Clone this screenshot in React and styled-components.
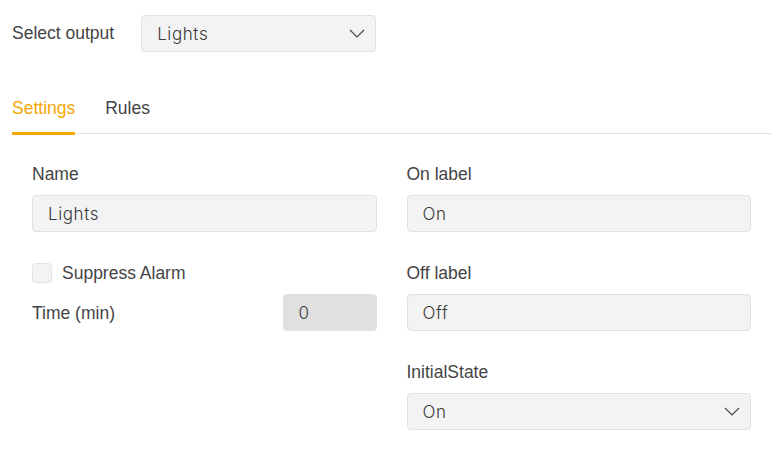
import React from "react";
import styled, { createGlobalStyle } from "styled-components";

const GlobalStyle = createGlobalStyle`
  body {
    margin: 0;
    background: #ffffff;
    font-family: "Liberation Sans", Arial, sans-serif;
  }
`;

const Page = styled.div`
  padding: 15px 10px 0 12px;
  width: 782px;
  box-sizing: border-box;
`;

const OutputRow = styled.div`
  display: flex;
  align-items: flex-start;
  gap: 27px;
`;

const Label = styled.div`
  font-family: "Liberation Sans", Arial, sans-serif;
  font-size: 17.5px;
  line-height: 22px;
  color: #444444;
  margin-top: ${props => props.offset || "0px"};
`;

const SelectBox = styled.div`
  box-sizing: border-box;
  width: ${props => props.width || "100%"};
  height: 37px;
  padding: 0 10px 0 15px;
  display: flex;
  align-items: center;
  justify-content: space-between;
  background: #f3f3f3;
  border: 1px solid #e1e1e1;
  border-radius: 4px;
  font-family: Inter, "Noto Sans", sans-serif;
  font-size: 17px;
  font-weight: 300;
  letter-spacing: 0.6px;
  color: #3a3a3a;
`;

const Tabs = styled.div`
  display: flex;
  gap: 30px;
  margin-top: 46px;
  border-bottom: 1px solid #e2e2e2;
`;

const Tab = styled.div`
  font-family: "Liberation Sans", Arial, sans-serif;
  font-size: 17.5px;
  line-height: 21px;
  padding-bottom: 13px;
  margin-bottom: -2px;
  color: ${props => (props.active ? "#f5a700" : "#444444")};
  border-bottom: 3px solid ${props => (props.active ? "#f5a700" : "transparent")};
`;

const Content = styled.div`
  display: grid;
  grid-template-columns: 1fr 1fr;
  column-gap: 30px;
  padding: 29px 21px 0 20px;
`;

const Column = styled.div`
  display: flex;
  flex-direction: column;
  gap: 30px;
`;

const Field = styled.div`
  display: flex;
  flex-direction: column;
  gap: 10px;
`;

const Input = styled.div`
  box-sizing: border-box;
  height: 37px;
  width: ${props => props.width || "100%"};
  padding: 0 15px;
  display: flex;
  align-items: center;
  background: ${props => (props.dark ? "#e0e0e0" : "#f3f3f3")};
  border: 1px solid ${props => (props.dark ? "#e0e0e0" : "#e1e1e1")};
  border-radius: 4px;
  font-family: Inter, "Noto Sans", sans-serif;
  font-size: 17px;
  font-weight: 300;
  letter-spacing: 0.6px;
  color: #3a3a3a;
`;

const CheckRow = styled.label`
  display: flex;
  align-items: center;
  gap: 10px;
  height: 22px;
  font-size: 17.5px;
  color: #444444;
`;

const CheckBox = styled.span`
  box-sizing: border-box;
  width: 20px;
  height: 20px;
  background: #f3f3f3;
  border: 1px solid #e4e4e4;
  border-radius: 4px;
`;

const TimeRow = styled.div`
  display: flex;
  align-items: center;
  justify-content: space-between;
`;

const Chevron = () => (
  <svg width="16" height="9" viewBox="0 0 16 9" fill="none">
    <path d="M1 1l7 7 7-7" stroke="#444" strokeWidth="1.1" />
  </svg>
);

export default function App() {
  return (
    <Page>
      <GlobalStyle />
      <OutputRow>
        <Label offset="7px">Select output</Label>
        <SelectBox width="235px">
          Lights
          <Chevron />
        </SelectBox>
      </OutputRow>
      <Tabs>
        <Tab active>Settings</Tab>
        <Tab>Rules</Tab>
      </Tabs>
      <Content>
        <Column>
          <Field>
            <Label>Name</Label>
            <Input>Lights</Input>
          </Field>
          <Field>
            <CheckRow>
              <CheckBox />
              Suppress Alarm
            </CheckRow>
            <TimeRow>
              <Label>Time (min)</Label>
              <Input width="94px" dark>0</Input>
            </TimeRow>
          </Field>
        </Column>
        <Column>
          <Field>
            <Label>On label</Label>
            <Input>On</Input>
          </Field>
          <Field>
            <Label>Off label</Label>
            <Input>Off</Input>
          </Field>
          <Field>
            <Label>InitialState</Label>
            <SelectBox>
              On
              <Chevron />
            </SelectBox>
          </Field>
        </Column>
      </Content>
    </Page>
  );
}
